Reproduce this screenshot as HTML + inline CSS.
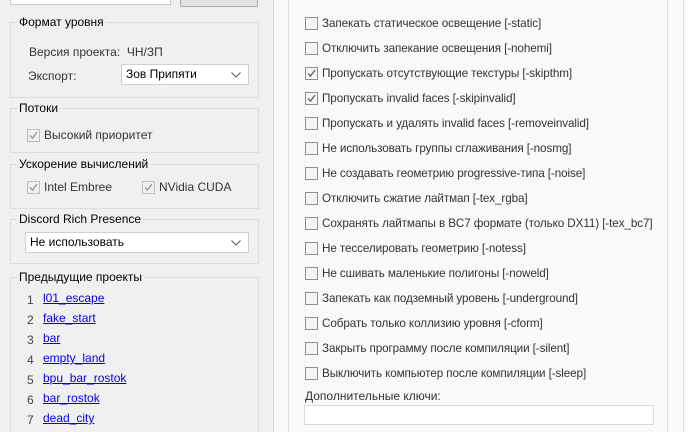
<!DOCTYPE html>
<html><head><meta charset="utf-8"><style>
*{margin:0;padding:0;box-sizing:border-box}
html{width:688px;height:432px;overflow:hidden}
body{width:688px;height:432px;overflow:hidden;background:#f0f0f0;font-family:"Liberation Sans",sans-serif;font-size:12px;color:#000;position:relative}
.a{position:absolute;white-space:nowrap}
.gb{position:absolute;border:1px solid #dcdcdc}
.gt{position:absolute;background:#f0f0f0;padding:0 2px;line-height:14px}
.cb{position:absolute;width:13px;height:13px;border:1px solid #8f8f8f;background:#f4f4f4}
.cb.dis{border-color:#bcbcbc;background:#f0f0f0}
.combo{position:absolute;background:#fff;border:1px solid #cfcfcf;line-height:18px;padding-left:4px}
.combo svg{position:absolute;right:7px;top:7px}
a{color:#0000ff;text-decoration:underline}
.num{color:#444}
.opt{font-size:11.7px;letter-spacing:-0.1px}
</style></head><body>
<div class="a" style="left:10px;top:-4px;width:161px;height:9px;background:#fff;border:1px solid #c8c8c8"></div>
<div class="a" style="left:180px;top:-4px;width:78px;height:11px;background:#e1e1e1;border:1px solid #adadad;border-radius:2px"></div>
<div class="a" style="left:273px;top:0;width:1px;height:432px;background:#dcdcdc"></div>
<div class="a" style="left:274px;top:0;width:414px;height:432px;background:#f9f9f9"></div>

<div class="gb" style="left:10px;top:22px;width:249px;height:76px"></div>
<div class="gt" style="left:17px;top:15px">Формат уровня</div>
<div class="a" style="left:29px;top:45px;color:#333">Версия проекта:&nbsp; ЧН/ЗП</div>
<div class="a" style="left:28px;top:69px;color:#333">Экспорт:</div>
<div class="combo" style="left:121px;top:64px;width:128px;height:21px">Зов Припяти<svg width="10" height="6"><path d="M0.5 0.5L5 5L9.5 0.5" fill="none" stroke="#555"/></svg></div>

<div class="gb" style="left:10px;top:108px;width:249px;height:45px"></div>
<div class="gt" style="left:17px;top:101px">Потоки</div>
<div class="cb dis" style="left:27px;top:129px"><svg width="11" height="11"><path d="M2 5.5L4.5 8L9 2" fill="none" stroke="#999" stroke-width="1.4"/></svg></div>
<div class="a" style="left:44px;top:128px;color:#333">Высокий приоритет</div>

<div class="gb" style="left:10px;top:164px;width:249px;height:45px"></div>
<div class="gt" style="left:17px;top:157px">Ускорение вычислений</div>
<div class="cb dis" style="left:27px;top:181px"><svg width="11" height="11"><path d="M2 5.5L4.5 8L9 2" fill="none" stroke="#999" stroke-width="1.4"/></svg></div>
<div class="a" style="left:44px;top:180px;color:#333">Intel Embree</div>
<div class="cb dis" style="left:142px;top:181px"><svg width="11" height="11"><path d="M2 5.5L4.5 8L9 2" fill="none" stroke="#999" stroke-width="1.4"/></svg></div>
<div class="a" style="left:159px;top:180px;color:#333">NVidia CUDA</div>

<div class="gb" style="left:10px;top:219px;width:249px;height:45px"></div>
<div class="gt" style="left:17px;top:212px">Discord Rich Presence</div>
<div class="combo" style="left:25px;top:232px;width:224px;height:21px">Не использовать<svg width="10" height="6"><path d="M0.5 0.5L5 5L9.5 0.5" fill="none" stroke="#555"/></svg></div>

<div class="gb" style="left:10px;top:277px;width:249px;height:170px"></div>
<div class="gt" style="left:17px;top:270px">Предыдущие проекты</div>
<div class="a num" style="left:27px;top:293px">1</div><a class="a" style="left:43px;top:291px">l01_escape</a>
<div class="a num" style="left:27px;top:313px">2</div><a class="a" style="left:43px;top:311px">fake_start</a>
<div class="a num" style="left:27px;top:333px">3</div><a class="a" style="left:43px;top:331px">bar</a>
<div class="a num" style="left:27px;top:353px">4</div><a class="a" style="left:43px;top:351px">empty_land</a>
<div class="a num" style="left:27px;top:373px">5</div><a class="a" style="left:43px;top:371px">bpu_bar_rostok</a>
<div class="a num" style="left:27px;top:393px">6</div><a class="a" style="left:43px;top:391px">bar_rostok</a>
<div class="a num" style="left:27px;top:413px">7</div><a class="a" style="left:43px;top:411px">dead_city</a>

<div class="a" style="left:288px;top:-10px;width:380px;height:450px;border:1px solid #dcdcdc"></div>
<div class="a" style="left:683px;top:0;width:1px;height:432px;background:#dcdcdc"></div>
<div id="opts"></div>
<div class="a" style="left:305px;top:389px;color:#333">Дополнительные ключи:</div>
<div class="a" style="left:304px;top:405px;width:350px;height:20px;background:#fff;border:1px solid #d9d9d9"></div>
<script>
var o=[["Запекать статическое освещение [-static]",0],["Отключить запекание освещения [-nohemi]",0],["Пропускать отсутствующие текстуры [-skipthm]",1],["Пропускать invalid faces [-skipinvalid]",1],["Пропускать и удалять invalid faces [-removeinvalid]",0],["Не использовать группы сглаживания [-nosmg]",0],["Не создавать геометрию progressive-типа [-noise]",0],["Отключить сжатие лайтмап [-tex_rgba]",0],["Сохранять лайтмапы в BC7 формате (только DX11) [-tex_bc7]",0],["Не тесселировать геометрию [-notess]",0],["Не сшивать маленькие полигоны [-noweld]",0],["Запекать как подземный уровень [-underground]",0],["Собрать только коллизию уровня [-cform]",0],["Закрыть программу после компиляции [-silent]",0],["Выключить компьютер после компиляции [-sleep]",0]];
var h="";o.forEach(function(e,i){var y=17+i*25;h+='<div class="cb" style="left:305px;top:'+y+'px">'+(e[1]?'<svg width="11" height="11"><path d="M2 5.5L4.5 8L9 2" fill="none" stroke="#666" stroke-width="1.4"/></svg>':'')+'</div><div class="a opt" style="left:322px;top:'+(y-0)+'px;color:#333">'+e[0]+'</div>';});
document.getElementById("opts").innerHTML=h;
</script>
</body></html>
